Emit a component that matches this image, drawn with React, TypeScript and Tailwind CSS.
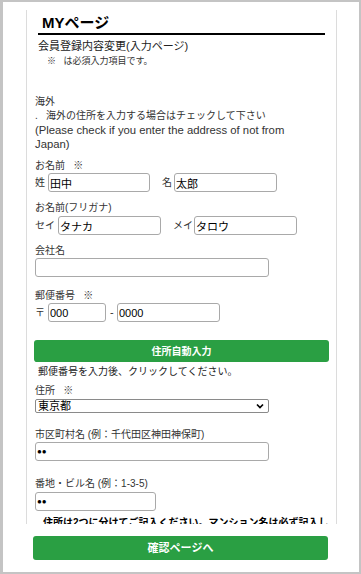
import React from 'react';

const font = { fontFamily: '"Liberation Sans", "Noto Sans CJK JP", sans-serif' };

function TextInput({ value = '', className = '' }: { value?: string; className?: string }) {
  return (
    <input
      readOnly
      value={value}
      className={`h-[19px] rounded-[3px] border border-[#a9a9a9] bg-white px-[1px] leading-[17px] text-black outline-none ${className}`}
    />
  );
}

function Label({ children, className = '' }: { children: React.ReactNode; className?: string }) {
  return <div className={`text-[10px] leading-[14px] text-[#333] ${className}`}>{children}</div>;
}

export default function App() {
  return (
    <div
      style={font}
      className="w-[361px] h-[574px] bg-white border-t-2 border-l-[3px] border-r-2 border-b-2 border-[#c4c4c4] flex flex-col overflow-hidden"
    >
      {/* scroll area */}
      <div className="mt-[8px] ml-[23px] w-[311px] h-[514px] shrink-0 border-x border-[#dcdcdc] overflow-hidden">
        {/* Header */}
        <div className="mx-[11px] mt-[2px] border-b-2 border-black pl-[4px] h-[23px]">
          <h1 className="text-[15px] leading-[21px] font-bold text-black">MYページ</h1>
        </div>
        <div className="pl-[11px] mt-[3px] text-[11px] leading-[16px] text-[#222]">会員登録内容変更(入力ページ)</div>
        <div className="pl-[20px] mt-[1px] text-[9px] leading-[12px] text-[#333]">※&nbsp;&nbsp;&nbsp;は必須入力項目です。</div>

        {/* Form */}
        <div className="pl-[8px] mt-[28px]">
          <Label>海外</Label>
          <Label>.&nbsp;&nbsp;&nbsp;海外の住所を入力する場合はチェックして下さい</Label>
          <div className="text-[11.3px] leading-[14px] text-[#333]">
            (Please check if you enter the address of not from
            <br />
            Japan)
          </div>

          <Label className="mt-[8px]">お名前&nbsp;&nbsp;&nbsp;※</Label>
          <div className="flex items-center h-[19px]">
            <span className="text-[10px] text-[#333] w-[13px]">姓</span>
            <TextInput value="田中" className="w-[102px] text-[11px]" />
            <span className="text-[10px] text-[#333] ml-[12px] w-[12px]">名</span>
            <TextInput value="太郎" className="w-[103px] text-[11px]" />
          </div>

          <Label className="mt-[9px]">お名前(フリガナ)</Label>
          <div className="flex items-center h-[19px] mt-[1px]">
            <span className="text-[10px] text-[#333] w-[23px]">セイ</span>
            <TextInput value="タナカ" className="w-[103px] text-[11px]" />
            <span className="text-[10px] text-[#333] ml-[12px] w-[21px]">メイ</span>
            <TextInput value="タロウ" className="w-[103px] text-[11px]" />
          </div>

          <Label className="mt-[9px]">会社名</Label>
          <TextInput className="block w-[234px] text-[11px]" />

          <Label className="mt-[12px]">郵便番号&nbsp;&nbsp;&nbsp;※</Label>
          <div className="flex items-center h-[19px]">
            <span className="text-[10px] text-[#333] w-[13px]">〒</span>
            <TextInput value="000" className="w-[58px] text-[11px]" />
            <span className="text-[11px] text-[#333] ml-[4px] w-[7px]">-</span>
            <TextInput value="0000" className="w-[103px] text-[11px]" />
          </div>
        </div>

        <div className="px-[7px] mt-[18px]">
          <button className="block w-full h-[22px] rounded-[3px] bg-[#2a9f43] text-white text-[10px] font-bold">
            住所自動入力
          </button>
          <div className="pl-[4px] mt-[3px] text-[10px] leading-[14px] text-[#222]">郵便番号を入力後、クリックしてください。</div>
        </div>

        <div className="pl-[8px] mt-[5px]">
          <Label>住所&nbsp;&nbsp;&nbsp;※</Label>
          <div className="relative w-[234px] mt-[1px]">
            <select
              defaultValue="東京都"
              className="block w-full h-[14px] appearance-none border border-[#8a8a8a] rounded-[2px] bg-white pl-[2px] text-[11px] leading-[12px] text-black"
            >
              <option>東京都</option>
            </select>
            <svg
              className="absolute right-[5px] top-[4px] pointer-events-none"
              width="8"
              height="6"
              viewBox="0 0 8 6"
            >
              <path d="M1 1.5 L4 4.5 L7 1.5" stroke="#000" strokeWidth="1.7" fill="none" />
            </svg>
          </div>

          <Label className="mt-[15px]">市区町村名 (例：千代田区神田神保町)</Label>
          <TextInput value="●●" className="block w-[234px] text-[8px]" />

          <Label className="mt-[16px]">番地・ビル名 (例：1-3-5)</Label>
          <TextInput value="●●" className="block w-[121px] mt-[1px] text-[8px]" />

          <div className="pl-[8px] mt-[5px] text-[10px] leading-[14px] font-bold text-black whitespace-nowrap">
            住所は2つに分けてご記入ください。マンション名は必ず記入し
          </div>
        </div>
      </div>

      <div className="pl-[30px] mt-[12px]">
        <button className="block w-[295px] h-[24px] rounded-[3px] bg-[#2a9f43] text-white text-[11px] font-bold">
          確認ページへ
        </button>
      </div>
    </div>
  );
}
